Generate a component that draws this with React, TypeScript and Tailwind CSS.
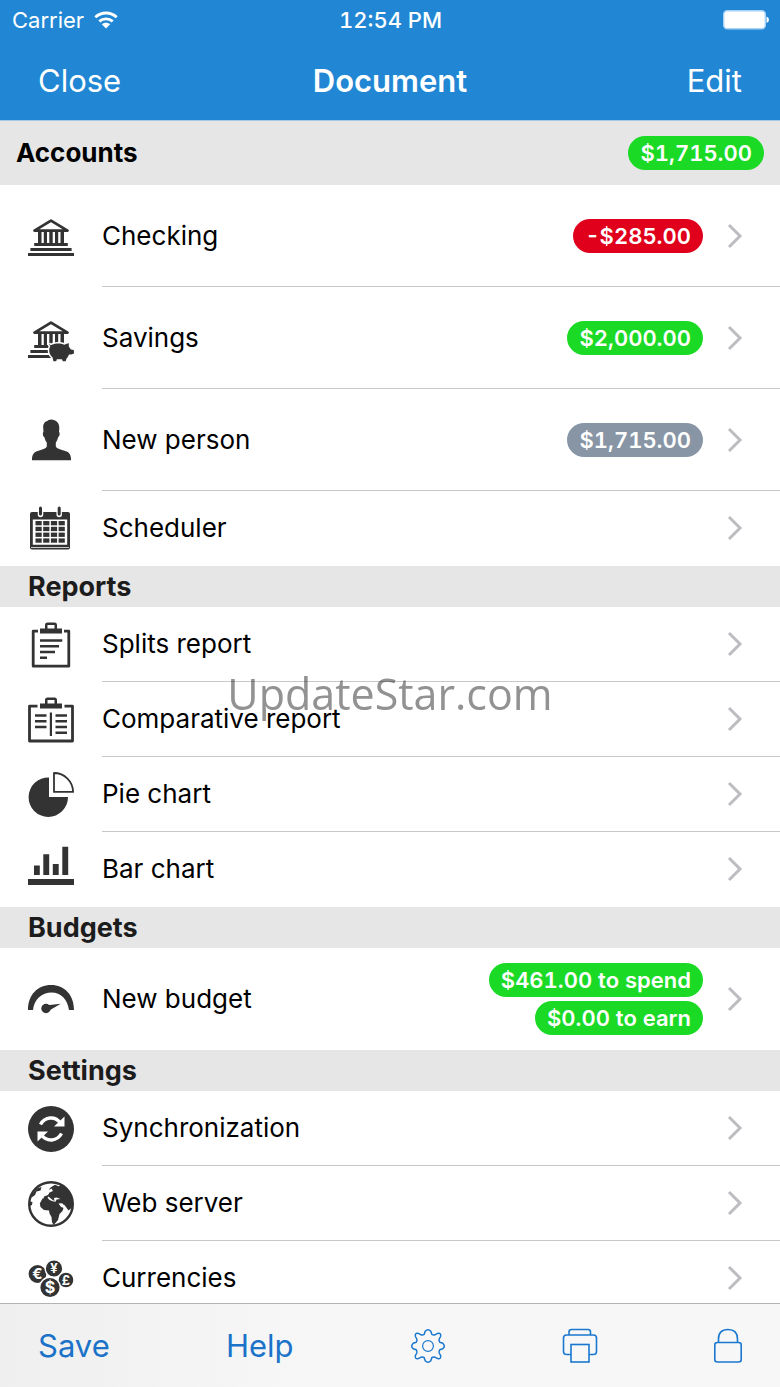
import type { ReactNode } from 'react';

type Badge = { text: string; color: string };

type Row = {
    label: string;
    icon: ReactNode;
    badges?: Badge[];
    tall?: boolean;
};

type Section = {
    title: string;
    total?: Badge;
    rows: Row[];
};

const GREEN = 'bg-[#1bda26]';
const RED = 'bg-[#e0001b]';
const GRAY = 'bg-[#8795a5]';

const Icon = ({ children }: { children: ReactNode }) => (
    <svg viewBox="0 0 46 50" className="w-[46px] h-[50px] shrink-0" fill="#333333" aria-hidden="true">
        {children}
    </svg>
);

const BankShape = () => (
    <>
        <path d="M23 9.600 39.500 19.600H6.500Z" fill="none" stroke="#333333" strokeWidth="2.800" strokeLinejoin="round" />
        <path d="M10 20h3.500v13H10zM15.800 20h3.200v13h-3.200zM21.300 20h3.400v13h-3.400zM27 20h3.200v13H27zM32.500 20H36v13h-3.500z" />
        <path d="M6.200 32h33.600v3H6.200zM2.400 37h41.200v3H2.400zM0 41.900h46v3.200H0z" />
    </>
);

const BankIcon = () => (
    <Icon>
        <BankShape />
    </Icon>
);

const SavingsIcon = () => (
    <Icon>
        <BankShape />
        {/* Pig, with a white rim that cuts it out of the building */}
        <path
            d="M21 30.500c.6 1.300 1.600 1.800 2.200 1.600 3-2 9-2.400 13.200-.4 1.500-.9 3-1.300 4.600-1.500-.3 1.500-.4 2.500.1 3.800l1.900 2.500 2.800.4.200 3.600-2.300 1.100c-1.500 2-3.200 3-5.200 3.900l-.8 2.700h-2.900l-.8-1.900h-5.200l-.6 1.900h-2.800l-.9-4c-2-1.700-3.300-4-3.300-6.800 0-1.800.4-3.200 1.200-4.400-.8-.5-1.400-1.300-1.400-2.500Z"
            stroke="#ffffff"
            strokeWidth="3"
            paintOrder="stroke"
        />
        <path d="M41 41.500h5v4h-7z" fill="#ffffff" />
    </Icon>
);

const PersonIcon = () => (
    <Icon>
        <path d="M23 4.500c5.200.3 8.600 3.500 8.300 9l-.3 3.500c1.200.5.700 4.500-.9 5.300-.5 2.300-1.300 4-2.300 5.200v4c1.600 2.800 6 3.300 10.200 4.700 3.800 1.300 5.200 4.600 5 9.100H4c-.2-4.500 1.300-7.800 5-9.100 4.200-1.400 8.300-1.900 9.800-4.700v-4c-1.100-1.200-1.900-2.900-2.400-5.200-1.500-.8-2.100-4.800-.9-5.300l-.3-4c-.3-5 2.500-6.500 4.200-7 .8-1 2.200-1.400 3.600-1.500Z" />
    </Icon>
);

const CalendarIcon = () => (
    <Icon>
        <path d="M4 8h36q2 0 2 2v33.500q0 2-2 2H4q-2 0-2-2V10q0-2 2-2Z" />
        <path d="M4.800 15.500h34.400v25.300h-34.400z" fill="#ffffff" />
        <path d="M3 43.300h38v.7h-38z" fill="#ffffff" />
        <path d="M12.500 4.500v6M31.200 4.500v6" stroke="#ffffff" strokeWidth="5.500" strokeLinecap="round" />
        <path d="M12.500 4v6M31.200 4v6" stroke="#333333" strokeWidth="3" strokeLinecap="round" />
        {[17, 22.800, 28.600, 34.400].map((y) =>
            [7.500, 15.200, 22.900, 30.600].map((x) => <rect key={`${x}-${y}`} x={x} y={y} width="6.200" height="4.300" />)
        )}
    </Icon>
);

const SplitsIcon = () => (
    <Icon>
        <path d="M10 11.200H5.200V46.200H40.800V11.200H36" fill="none" stroke="#333333" strokeWidth="2.800" strokeLinejoin="round" />
        <path d="M12 8.500h5V5q0-2.500 2.500-2.500h7Q29 2.500 29 5v3.500h5v5H12Zm7.500 0h7V5h-7Z" fillRule="evenodd" />
        <path d="M12 19.300h22.300v2.500H12zM12 25h19v2.500H12zM12 30.700h15v2.500H12zM12 36.500h7V39h-7z" />
    </Icon>
);

const CompareIcon = () => (
    <Icon>
        <path d="M9.500 11.200H1.500V46H44.500V11.200H36.500" fill="none" stroke="#333333" strokeWidth="2.800" strokeLinejoin="round" />
        <path d="M12 8.500h5V5q0-2.500 2.500-2.500h7Q29 2.500 29 5v3.500h5v5H12Zm7.500 0h7V5h-7Z" fillRule="evenodd" />
        <path d="M21.800 17.500h2.200v23.500h-2.200z" />
        <path d="M7 19.300h11.500v2.500H7zM7 25h11.500v2.500H7zM7 30.700h11.500v2.500H7z" />
        <path d="M27.500 19.300H39v2.500H27.500zM27.500 25H39v2.500H27.500zM27.500 30.700H39v2.500H27.500zM27.500 36.500H39V39H27.500z" />
    </Icon>
);

const PieIcon = () => (
    <Icon>
        <path d="M21 7.500V27h19A19.700 19.700 0 1 1 21 7.500Z" />
        <path d="M26 3v18.900h19.100A19 19 0 0 0 26 3Z" fill="none" stroke="#333333" strokeWidth="1.800" strokeLinejoin="round" />
    </Icon>
);

const BarsIcon = () => (
    <Icon>
        <path d="M6 20.500h5.800V30H6zM15.300 9.300h5.900V30h-5.900zM24.800 19h5.900v11h-5.900zM34.300 1.800h5.900V30h-5.900zM0 34h46v6H0z" />
    </Icon>
);

const GaugeIcon = () => (
    <Icon>
        <path d="M0 36C0 21 9.500 11 23 11s23 10 23 25h-5c-1.500-10.500-8-17.500-17.500-17.500S6 25.500 5 36Z" />
        <path d="M32.800 29.800 17 31.500l2.500 6Z" />
        <circle cx="18" cy="34.500" r="4.700" />
    </Icon>
);

const SyncIcon = () => (
    <Icon>
        <circle cx="23" cy="25" r="23" />
        <path d="M12.500 20.500c4.500-8 14.500-8.500 19.500-2" fill="none" stroke="#ffffff" strokeWidth="3.400" />
        <path d="M36.500 12.500v10H26Z" fill="#ffffff" />
        <path d="M33.500 29.500c-4.500 8-14.500 8.500-19.500 2" fill="none" stroke="#ffffff" strokeWidth="3.400" />
        <path d="M9.500 37.500v-10H20Z" fill="#ffffff" />
    </Icon>
);

const GlobeIcon = () => (
    <Icon>
        <circle cx="23" cy="25" r="21.800" fill="#ffffff" stroke="#333333" strokeWidth="2.400" />
        {/* Greenland and the edge of America */}
        <path d="M4 15.500 9 9.500l4.500-1.500-1 3.500-4 1-1.500 3.500L3 19ZM2 22.500l2.500.5-.5 3-2.500 1Z" />
        {/* Europe and Asia */}
        <path d="M22.500 8.500 27 5.800l3.500 1.400 3.500-1.500L42 13l3 9-1 6.500-3.500 3-4-5.500-3.500-1.500-3 .5-2.500-2 1-2.500 4-.5-4-1.500-2.500.5.500 3-2.500-1.500-3.500-3-2 2.500-3 .5.500-3 4-1.500 1.500-2.500 3.500-1.500-1.500-2.500-3 1.500Z" />
        {/* Africa */}
        <path d="m14.500 19.500 5-.8 2 2.300 4 1.500 5 .5 2.500 4.500 2.500 1.500-1 3-3 3-1.500 6-2.500 3-2 2-1.500-3-.5-5-2-3.500-.5-3-5-.5-3.500-3-.7-3.500Z" />
        <path d="M30.500 24.500h4.500l-1.500 4Z" fill="#ffffff" />
    </Icon>
);

const coins = [
    { sign: '€', x: 9.500, y: 20, r: 9.600, size: 15 },
    { sign: '¥', x: 26, y: 14.500, r: 8.800, size: 13 },
    { sign: '£', x: 38, y: 26, r: 8, size: 13 },
    { sign: '$', x: 22, y: 33.500, r: 10.300, size: 16 }
];

const CoinsIcon = () => (
    <Icon>
        {coins.map((coin) => (
            <g key={coin.sign}>
                <circle cx={coin.x} cy={coin.y} r={coin.r} stroke="#ffffff" strokeWidth="1.400" />
                <text
                    x={coin.x}
                    y={coin.y + coin.size * 0.36}
                    textAnchor="middle"
                    fontSize={coin.size}
                    fontWeight="700"
                    fill="#ffffff"
                >
                    {coin.sign}
                </text>
            </g>
        ))}
    </Icon>
);

const sections: Section[] = [
    {
        title: 'Accounts',
        total: { text: '$1,715.00', color: GREEN },
        rows: [
            { label: 'Checking', icon: <BankIcon />, badges: [{ text: '-$285.00', color: RED }], tall: true },
            { label: 'Savings', icon: <SavingsIcon />, badges: [{ text: '$2,000.00', color: GREEN }], tall: true },
            { label: 'New person', icon: <PersonIcon />, badges: [{ text: '$1,715.00', color: GRAY }], tall: true },
            { label: 'Scheduler', icon: <CalendarIcon /> }
        ]
    },
    {
        title: 'Reports',
        rows: [
            { label: 'Splits report', icon: <SplitsIcon /> },
            { label: 'Comparative report', icon: <CompareIcon /> },
            { label: 'Pie chart', icon: <PieIcon /> },
            { label: 'Bar chart', icon: <BarsIcon /> }
        ]
    },
    {
        title: 'Budgets',
        rows: [
            {
                label: 'New budget',
                icon: <GaugeIcon />,
                badges: [
                    { text: '$461.00 to spend', color: GREEN },
                    { text: '$0.00 to earn', color: GREEN }
                ],
                tall: true
            }
        ]
    },
    {
        title: 'Settings',
        rows: [
            { label: 'Synchronization', icon: <SyncIcon /> },
            { label: 'Web server', icon: <GlobeIcon /> },
            { label: 'Currencies', icon: <CoinsIcon /> }
        ]
    }
];

const Pill = ({ badge }: { badge: Badge }) => (
    <span className={`h-[34px] px-3 rounded-full flex items-center text-[22px] leading-none font-semibold tabular-nums text-white ${badge.color}`}>
        {badge.text}
    </span>
);

const Chevron = () => (
    <svg viewBox="0 0 16 26" className="w-4 h-[26px] shrink-0" fill="none" stroke="#bdbdc1" strokeWidth="3" aria-hidden="true">
        <path d="M2 2 13 13 2 24" />
    </svg>
);

const StatusBar = () => (
    <div className="h-10 pl-3 pr-[11px] grid grid-cols-3 items-center text-[22px] leading-none">
        <div className="flex items-center gap-[10px]">
            <span>Carrier</span>
            <svg viewBox="0 0 24 18" className="w-6 h-[18px]" fill="none" stroke="#ffffff" strokeWidth="2.800" aria-hidden="true">
                <path d="M1.300 6.200c6-5.600 15.400-5.600 21.400 0M5.300 10.400c3.800-3.500 9.600-3.500 13.400 0" />
                <path d="M12 17.500 7.800 13.300c2.400-2 6-2 8.400 0Z" fill="#ffffff" stroke="none" />
            </svg>
        </div>
        <span className="text-center font-medium tabular-nums">12:54 PM</span>
        <svg viewBox="0 0 46 20" className="w-[46px] h-5 justify-self-end" aria-hidden="true">
            <rect x="0.700" y="0.700" width="41.600" height="18" rx="3.500" fill="#ffffff" stroke="#a6d2f5" strokeWidth="1.400" />
            <path d="M43.500 6.500q2.500.8 2.500 3.200t-2.500 3.200Z" fill="#ffffff" />
        </svg>
    </div>
);

const App = () => {
    return (
        <div className="h-screen flex flex-col bg-white text-black font-['Inter',sans-serif]">
            {/* Header */}
            <header className="shrink-0 bg-[#2187d4] text-white border-b border-[#a3c9e8]">
                <StatusBar />
                <div className="h-20 px-[38px] grid grid-cols-3 items-center text-[31px] leading-none">
                    <button className="justify-self-start">Close</button>
                    <h1 className="text-center font-semibold">Document</h1>
                    <button className="justify-self-end">Edit</button>
                </div>
            </header>

            {/* List */}
            <main className="relative flex-1 min-h-0 overflow-y-auto [scrollbar-width:none]">
                {sections.map((section) => (
                    <section key={section.title}>
                        {section.total ? (
                            <div className="h-16 px-4 flex items-center justify-between bg-[#e6e6e6]">
                                <h2 className="text-[26px] leading-none font-bold">{section.title}</h2>
                                <Pill badge={section.total} />
                            </div>
                        ) : (
                            <div className="h-[41px] px-7 flex items-center bg-[#e6e6e6] text-[#1c1c1c]">
                                <h2 className="text-[27px] leading-none font-bold">{section.title}</h2>
                            </div>
                        )}
                        {section.rows.map((row, idx) => (
                            <button
                                key={row.label}
                                className={`w-full pl-7 flex items-center gap-7 text-left ${row.tall ? 'h-[102px]' : 'h-[75px]'}`}
                            >
                                {row.icon}
                                <span
                                    className={`flex-1 self-stretch pr-[37px] flex items-center gap-6 border-b ${idx !== section.rows.length - 1 ? 'border-[#c8c8cc]' : 'border-transparent'}`}
                                >
                                    <span className="flex-1 text-[26px] leading-none">{row.label}</span>
                                    {row.badges && (
                                        <span className="flex flex-col items-end gap-1">
                                            {row.badges.map((badge) => (
                                                <Pill key={badge.text} badge={badge} />
                                            ))}
                                        </span>
                                    )}
                                    <Chevron />
                                </span>
                            </button>
                        ))}
                    </section>
                ))}
            </main>

            {/* Watermark */}
            <div className="fixed inset-0 flex items-center justify-center pointer-events-none mix-blend-multiply">
                <span className="text-[43px] leading-none text-[#929292] font-['Open_Sans',sans-serif]">UpdateStar.com</span>
            </div>

            {/* Toolbar */}
            <footer className="shrink-0 h-[84px] px-[38px] flex items-center justify-between border-t border-[#b4b4b4] bg-linear-to-r from-[#efefef] to-[#f7f7f7] to-40% text-[#1a72c9] text-[31px] leading-none">
                <button>Save</button>
                <button>Help</button>
                <button aria-label="Options">
                    <svg viewBox="0 0 36 36" className="w-9 h-9" fill="none" stroke="#1a78cf" strokeWidth="1.500" strokeLinejoin="round">
                        <path d="M15.200 3.200Q18 .2 20.800 3.200L21.800 6.300Q23.300 7.300 25 6.800L27.500 5.400Q31.400 4.600 30.600 8.500L29.200 11Q28.700 12.700 29.700 14.200L32.800 15.200Q35.800 18 32.800 20.800L29.700 21.800Q28.700 23.300 29.200 25L30.600 27.500Q31.400 31.400 27.500 30.600L25 29.200Q23.300 28.700 21.800 29.700L20.800 32.800Q18 35.800 15.200 32.800L14.200 29.700Q12.700 28.700 11 29.200L8.500 30.600Q4.600 31.400 5.400 27.500L6.800 25Q7.300 23.300 6.300 21.800L3.200 20.800Q.2 18 3.200 15.200L6.300 14.200Q7.300 12.700 6.800 11L5.400 8.500Q4.600 4.600 8.500 5.400L11 6.800Q12.700 7.300 14.200 6.300Z" />
                        <circle cx="18" cy="18" r="5.400" strokeWidth="1.200" />
                    </svg>
                </button>
                <button aria-label="Print">
                    <svg viewBox="0 0 36 36" className="w-9 h-9" fill="none" stroke="#1a78cf" strokeWidth="1.600">
                        <path d="M7 7V4q0-2.500 2.500-2.500h16.500q2.500 0 2.500 2.500v3" />
                        <path d="M9 26.500H4.500q-3 0-3-3V10q0-3 3-3h27q3 0 3 3v13.500q0 3-3 3H27" />
                        <rect x="9" y="16.500" width="18" height="17.500" />
                    </svg>
                </button>
                <button aria-label="Lock">
                    <svg viewBox="1 0 28 36" className="w-7 h-9" fill="none" stroke="#1a78cf" strokeWidth="1.600">
                        <rect x="1.800" y="14.500" width="26.400" height="19.500" rx="2.500" />
                        <path d="M5.500 14.500V11q0-9.500 9.500-9.500t9.500 9.500v3.500" />
                    </svg>
                </button>
            </footer>
        </div>
    );
};

export default App;
